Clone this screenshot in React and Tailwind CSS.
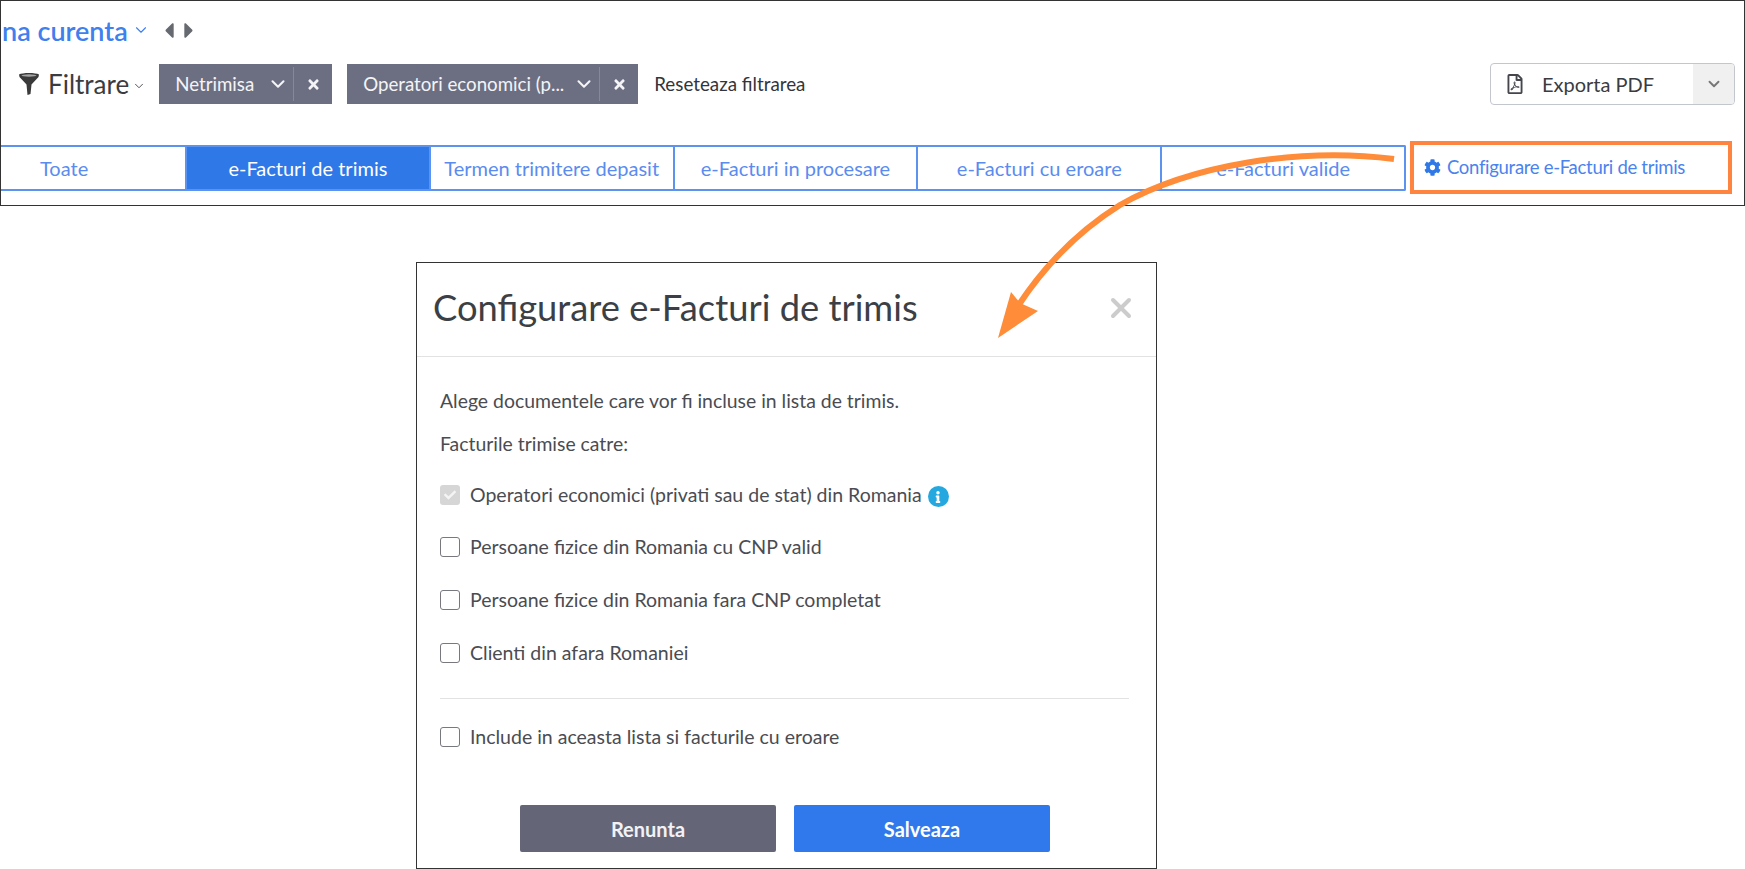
import { ChevronDown, X } from 'lucide-react';
import { FaCog, FaTimes, FaRegFilePdf, FaCaretLeft, FaCaretRight, FaInfo, FaCheck } from 'react-icons/fa';

const tabs = ['e-Facturi de trimis', 'Termen trimitere depasit', 'e-Facturi in procesare', 'e-Facturi cu eroare', 'e-Facturi valide'];

const FilterChip = ({ label, textWidth }) => (
  <div className="flex h-10 items-center bg-[#6c6f82] text-[#f4f4f6] text-[18.7px]">
    <span className={`pl-4 truncate ${textWidth}`}>{label}</span>
    <ChevronDown className="w-[22px] h-[22px] ml-auto" strokeWidth={2.25} />
    <div className="w-px h-[34px] bg-[#85889a] ml-[4px]" />
    <div className="w-[38px] flex justify-center">
      <FaTimes className="w-[13px] h-[15px]" />
    </div>
  </div>
);

const CheckRow = ({ label, className = '' }) => (
  <label className={`flex items-center h-6 text-[19.5px] text-[#4a4c52] ${className}`}>
    <span className="w-5 h-5 mr-2.5 shrink-0 rounded-[3px] border border-[#77797f] bg-white" />
    {label}
  </label>
);

export default function App() {
  return (
    <div className="relative w-[1745px] h-[869px] bg-white overflow-hidden" style={{ fontFamily: 'Lato, sans-serif' }}>
      {/* top strip of the page */}
      <div className="h-[206px] border border-[#333] overflow-hidden">
        <div className="flex items-center h-[30px] mt-[14px] pl-[1px]">
          <span className="text-[27px] font-semibold text-[#3f7fee] leading-none">na curenta</span>
          <ChevronDown className="w-[18px] h-[18px] ml-[4px] text-[#3f7fee]" strokeWidth={1.5} />
          <FaCaretLeft className="w-[16px] h-[25px] ml-[11px] text-[#666a70]" />
          <FaCaretRight className="w-[16px] h-[25px] ml-[4px] text-[#666a70]" />
        </div>

        <div className="flex items-center h-[42px] mt-[18px]">
          <svg viewBox="0 0 20 22" className="w-[20px] h-[22px] ml-[18px] text-[#3a3a3a]" fill="currentColor">
            <path d="M0 1.5 C3 -0.5 17 -0.5 20 1.5 L19.5 4 L12.5 11.5 L11.5 21 L8.5 22 L7.5 11.5 L0.5 4 Z" />
            <ellipse cx="10" cy="2.5" rx="7.5" ry="1.2" fill="#fff" opacity="0.55" />
          </svg>
          <span className="ml-[9px] text-[26px] text-[#3a3c42]">Filtrare</span>
          <ChevronDown className="w-[14px] h-[14px] ml-[3px] mt-[3px] text-[#3a3c42]" strokeWidth={1.5} />
          <div className="w-[173px] ml-[13px]"><FilterChip label="Netrimisa" textWidth="w-[100px]" /></div>
          <div className="w-[291px] ml-[15px]"><FilterChip label="Operatori economici (p..." textWidth="w-[225px]" /></div>
          <span className="ml-[16px] text-[18.8px] text-[#33353a]">Reseteaza filtrarea</span>
          <div className="ml-auto mr-[9px] w-[245px] h-[42px] flex items-center rounded border border-[#c3c7cd] overflow-hidden">
            <FaRegFilePdf className="w-[18px] h-[20px] ml-[15px] text-[#44464c]" />
            <span className="ml-[18px] text-[20px] text-[#3a3c42]">Exporta PDF</span>
            <div className="ml-auto w-[41px] h-full bg-[#f0f0f0] flex items-center justify-center">
              <ChevronDown className="w-[18px] h-[18px] text-[#777]" strokeWidth={2.5} />
            </div>
          </div>
        </div>

        <div className="flex items-center mt-[36px] h-[53px]">
          <div className="flex h-[46px] w-[1405px] text-[20px] text-[#5a8cf0] border-2 border-l-0 border-[#5b93ee] rounded-r-[2px]">
            <div className="w-[184px] shrink-0 flex items-center pl-[39px]">Toate</div>
            {tabs.map((t, i) => (
              <div
                key={t}
                className={`flex-1 flex items-center justify-center border-l-2 border-[#5b93ee] ${i === 0 ? 'bg-[#2f78e8] text-white' : ''}`}
              >
                {t}
              </div>
            ))}
          </div>
          <div className="ml-[4px] w-[322px] h-[53px] flex items-center border-[4px] border-[#ff843f] text-[18.5px] tracking-[-0.3px] text-[#4a83ee]">
            <FaCog className="w-[17px] h-[17px] ml-[10px] mr-[6px] text-[#2f78e8]" />
            Configurare e-Facturi de trimis
          </div>
        </div>
      </div>

      {/* dialog */}
      <div className="ml-[416px] mt-[56px] w-[741px] h-[607px] border border-[#333] flex flex-col">
        <div className="h-[94px] shrink-0 border-b border-[#e2e2e2] flex items-center justify-between pl-[16px] pr-[19px]">
          <h2 className="text-[36.3px] text-[#3c3f45] -mt-[4px]">Configurare e-Facturi de trimis</h2>
          <X className="w-[32px] h-[32px] text-[#cccccc] -mt-[3px]" strokeWidth={3} />
        </div>
        <div className="flex flex-col flex-1 pl-[23px] pr-[27px]">
          <p className="mt-[32px] h-6 leading-6 text-[19.4px] text-[#4a4c52]">Alege documentele care vor fi incluse in lista de trimis.</p>
          <p className="mt-[19px] h-6 leading-6 text-[19.4px] text-[#4a4c52]">Facturile trimise catre:</p>
          <label className="flex items-center h-6 mt-[27px] text-[19.5px] text-[#4a4c52]">
            <span className="w-5 h-5 mr-2.5 shrink-0 rounded-[3px] bg-[#d6d6d6] flex items-center justify-center">
              <FaCheck className="w-3 h-3 text-[#f4f4f4]" />
            </span>
            Operatori economici (privati sau de stat) din Romania
            <span className="ml-[6px] mt-[3px] w-[21px] h-[21px] rounded-full bg-[#25a8e0] flex items-center justify-center">
              <FaInfo className="w-[10px] h-[12px] text-white" />
            </span>
          </label>
          <CheckRow label="Persoane fizice din Romania cu CNP valid" className="mt-[28px]" />
          <CheckRow label="Persoane fizice din Romania fara CNP completat" className="mt-[29px]" />
          <CheckRow label="Clienti din afara Romaniei" className="mt-[29px]" />
          <div className="h-px bg-[#e2e2e2] mt-[33px]" />
          <CheckRow label="Include in aceasta lista si facturile cu eroare" className="mt-[26px]" />
          <div className="flex justify-center gap-[18px] mt-[56px] -mr-[4px] -ml-[3px]">
            <button className="w-[256px] h-[47px] rounded-[2px] bg-[#646678] text-[20px] font-bold text-[#f2f2f4]">Renunta</button>
            <button className="w-[256px] h-[47px] rounded-[2px] bg-[#3079ed] text-[20px] font-bold text-white">Salveaza</button>
          </div>
        </div>
      </div>

      {/* annotation arrow over the screenshot */}
      <svg className="absolute left-0 top-0 w-[1745px] h-[869px] pointer-events-none" viewBox="0 0 1745 869" fill="none">
        <path d="M1394 159 C1300 147 1190 165 1120 205 C1080 230 1045 265 1018 306" stroke="#ff8c38" strokeWidth="6" />
        <path d="M998 338 L1011 292 L1020 303 L1038 311 Z" fill="#ff8c38" />
      </svg>
    </div>
  );
}
